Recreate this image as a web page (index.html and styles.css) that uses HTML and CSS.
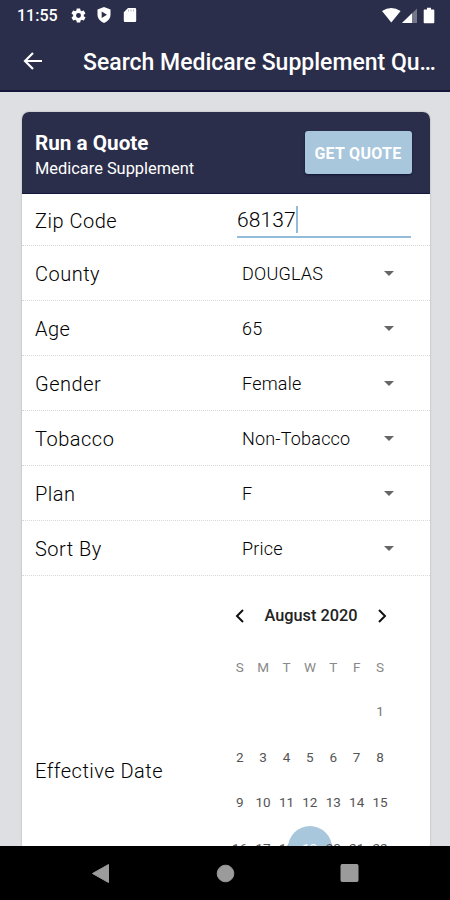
FILE: index.html
```html
<!DOCTYPE html>
<html lang="en">
<head>
    <meta charset="UTF-8">
    <meta name="viewport" content="width=device-width, initial-scale=1.0">
    <title>Search Medicare Supplement Quotes</title>
    <link rel="stylesheet" href="styles.css">
</head>
<body>
    <header class="top">
        <div class="status-bar">
            <span class="clock">11:55</span>
            <svg class="status-icon gear" viewBox="0 0 24 24" width="17" height="17"><path fill="#fff" d="M19.4 13c.1-.3.1-.6.1-1s0-.7-.1-1l2.100-1.600c.2-.2.3-.4.1-.7l-2-3.400c-.1-.2-.4-.3-.6-.2l-2.500 1c-.5-.4-1.100-.7-1.700-1l-.4-2.600c0-.3-.2-.5-.5-.5h-4c-.3 0-.5.200-.5.500L9 5.100c-.6.300-1.200.600-1.700 1l-2.500-1c-.2-.1-.5 0-.6.200l-2 3.400c-.1.300 0 .5.100.7L4.500 11c0 .3-.1.700-.1 1s0 .7.100 1l-2.100 1.600c-.2.200-.2.500-.1.700l2 3.400c.1.200.4.300.6.200l2.500-1c.5.400 1.100.7 1.700 1l.4 2.600c0 .3.200.5.500.5h4c.3 0 .5-.2.500-.5l.4-2.600c.6-.3 1.200-.6 1.700-1l2.500 1c.2.100.5 0 .6-.2l2-3.400c.1-.2.100-.5-.1-.7zM12 15.500a3.500 3.500 0 1 1 0-7 3.500 3.500 0 0 1 0 7z"/></svg>
            <svg class="status-icon shield" viewBox="0 0 16 18" width="16" height="18"><path fill="#fff" d="M8 1l6.500 2.500v5c0 4-2.500 6.800-6.500 8.500-4-1.700-6.500-4.500-6.500-8.500v-5z"/><path fill="#2b2e4a" d="M5.700 5.400L11 8.700l-5.300 3.300z"/></svg>
            <svg class="status-icon sd" viewBox="0 0 14 16" width="14" height="16"><path fill="#fff" d="M5 1h7a1.200 1.200 0 0 1 1.200 1.200v11.600A1.200 1.200 0 0 1 12 15H2a1.200 1.200 0 0 1-1.200-1.200V5.200z"/><path stroke="#b9bac6" d="M5.500 2.500v2M8 2.500v2M10.500 2.500v2"/></svg>
            <span class="spacer"></span>
            <svg class="status-icon" viewBox="0 0 55 17" width="55" height="17"><path fill="#fff" d="M0 4Q9.300-2 18.600 4L9.300 15.500z"/><path fill="#747689" d="M35 1.500V16H20z"/><path fill="#fff" d="M30 6.300V16H20z"/><path fill="#fff" d="M42.500 2.500h2.500V.8h4v1.700h2.500q.8 0 .8.800v12q0 .9-.8.900h-9q-.8 0-.8-.9v-12q0-.8.800-.8z"/></svg>
        </div>
        <div class="app-bar">
            <svg class="back" viewBox="0 0 20 18" width="20" height="18"><path d="M19 9H1.500M10 1L2 9l8 8" fill="none" stroke="#fff" stroke-width="2.200"/></svg>
            <h1>Search Medicare Supplement Qu…</h1>
        </div>
    </header>

    <main class="content">
        <form class="card">
            <div class="card-header">
                <div>
                    <h2>Run a Quote</h2>
                    <p>Medicare Supplement</p>
                </div>
                <button type="button">GET QUOTE</button>
            </div>
            <div class="row zip">
                <label>Zip Code</label>
                <div class="zip-input"><span>68137</span></div>
            </div>
            <div class="row">
                <label>County</label>
                <div class="select">DOUGLAS</div>
            </div>
            <div class="row">
                <label>Age</label>
                <div class="select">65</div>
            </div>
            <div class="row">
                <label>Gender</label>
                <div class="select">Female</div>
            </div>
            <div class="row">
                <label>Tobacco</label>
                <div class="select">Non-Tobacco</div>
            </div>
            <div class="row">
                <label>Plan</label>
                <div class="select">F</div>
            </div>
            <div class="row">
                <label>Sort By</label>
                <div class="select">Price</div>
            </div>
            <div class="row date">
                <label>Effective Date</label>
                <div class="calendar">
                    <div class="month">
                        <svg viewBox="0 0 10 14" width="10" height="14"><path d="M8 1L2 7l6 6" fill="none" stroke="#111" stroke-width="2"/></svg>
                        <span>August 2020</span>
                        <svg viewBox="0 0 10 14" width="10" height="14"><path d="M2 1l6 6-6 6" fill="none" stroke="#111" stroke-width="2"/></svg>
                    </div>
                    <div class="week names"><span>S</span><span>M</span><span>T</span><span>W</span><span>T</span><span>F</span><span>S</span></div>
                    <div class="week past"><span></span><span></span><span></span><span></span><span></span><span></span><span>1</span></div>
                    <div class="week"><span>2</span><span>3</span><span>4</span><span>5</span><span>6</span><span>7</span><span>8</span></div>
                    <div class="week"><span>9</span><span>10</span><span>11</span><span>12</span><span>13</span><span>14</span><span>15</span></div>
                    <div class="week"><span>16</span><span>17</span><span>18</span><span class="selected">19</span><span>20</span><span>21</span><span>22</span></div>
                </div>
            </div>
        </form>
    </main>

    <nav class="nav-bar">
        <svg viewBox="0 0 450 54" width="450" height="54"><g fill="#9b9b9b" stroke="#9b9b9b" stroke-linejoin="round"><path d="M92.500 27.500L108.500 18.500v18z"/><circle cx="225.500" cy="27.500" r="8.300"/><rect x="341" y="18.500" width="17" height="17" rx="1"/></g></svg>
    </nav>
</body>
</html>
```
FILE: styles.css
```css
* {
    box-sizing: border-box;
}

body {
    margin: 0;
    height: 900px;
    display: flex;
    flex-direction: column;
    overflow: hidden;
    font-family: Roboto, sans-serif;
    background-color: #dddfe3;
}

h1, h2, p {
    margin: 0;
}

.top {
    height: 92px;
    flex: none;
    background-color: #2b2e4a;
    border-bottom: 2px solid #15163c;
    color: #fff;
}

.status-bar {
    display: flex;
    align-items: center;
    height: 30px;
    padding: 0 13px 0 17px;
}

.clock {
    width: 53px;
    font-size: 16px;
    font-weight: 500;
}

.shield {
    margin-left: 9px;
}

.sd {
    margin-left: 11px;
}

.spacer {
    flex: 1;
}

.app-bar {
    display: flex;
    align-items: center;
    height: 61px;
    padding-left: 23px;
}

.app-bar h1 {
    margin-top: 3px;
    margin-left: 40px;
    font-size: 23px;
    font-weight: 500;
    white-space: nowrap;
}

.content {
    flex: 1;
    min-height: 0;
    overflow: hidden;
    padding: 20px 20.500px 0 21.500px;
}

.card {
    height: 853px;
    background-color: #fff;
    border-radius: 7px;
    box-shadow: 0 0 2px rgba(0, 0, 0, 0.25);
    overflow: hidden;
}

.card-header {
    display: flex;
    align-items: center;
    justify-content: space-between;
    height: 82px;
    padding: 0 18px 0 13.500px;
    background-color: #2b2e4a;
    border-bottom: 1px solid #15163c;
    color: #fff;
}

.card-header h2 {
    margin-top: 5px;
    font-size: 20.700px;
    line-height: 26px;
    font-weight: 700;
}

.card-header p {
    font-size: 16.400px;
    line-height: 25px;
}

button {
    width: 107px;
    height: 43px;
    padding: 2px 0 0;
    border: none;
    border-radius: 3px;
    background-color: #a8c6dc;
    box-shadow: 0 1px 2px #11123a;
    color: #fff;
    font-family: inherit;
    font-size: 16px;
    font-weight: 700;
    letter-spacing: 0.3px;
}

.row {
    display: flex;
    align-items: center;
    height: 54.950px;
    padding-top: 2px;
    padding-left: 13.500px;
    border-bottom: 1px dotted #d8d8da;
}

.row label {
    width: 202px;
    font-size: 20px;
    font-weight: 300;
    letter-spacing: 0.500px;
    color: #000;
}

.zip {
    height: 52px;
}

.zip-input {
    width: 174px;
    height: 35px;
    padding-top: 3px;
    border-bottom: 2px solid #92bcd9;
    font-size: 21px;
    font-weight: 300;
    letter-spacing: 0.1px;
    color: #000;
}

.zip-input span {
    display: inline-block;
    height: 27px;
    line-height: 29px;
    border-right: 2px solid #92bcd9;
}

.select {
    display: flex;
    align-items: center;
    justify-content: space-between;
    width: 157px;
    padding-left: 5px;
    font-size: 18px;
    font-weight: 300;
    letter-spacing: 0.2px;
    color: #000;
}

.select::after {
    content: "";
    border: 5.500px solid transparent;
    border-top-color: #666;
    border-bottom: none;
}

.date {
    height: 389px;
    border-bottom: none;
}

.date .calendar {
    align-self: flex-start;
    width: 164px;
    margin-left: -9px;
    padding-top: 15px;
}

.month {
    display: flex;
    align-items: center;
    justify-content: space-between;
    height: 46px;
    padding: 0 5px 0 7px;
    font-size: 16.300px;
    font-weight: 500;
    color: #222;
}

.week {
    display: grid;
    grid-template-columns: repeat(7, 23.400px);
    height: 45.500px;
    align-items: center;
    text-align: center;
    font-size: 13.500px;
    font-weight: 400;
    color: #555;
}

.week.names {
    height: 57px;
    color: #888;
}

.week.past {
    height: 31px;
    margin-bottom: 7.500px;
    color: #777;
}

.selected {
    justify-self: center;
    width: 44px;
    height: 44px;
    line-height: 44px;
    border-radius: 50%;
    background-color: #a8c6dc;
    color: #fff;
}

.nav-bar {
    flex: none;
    height: 54px;
    background-color: #000;
}
```
